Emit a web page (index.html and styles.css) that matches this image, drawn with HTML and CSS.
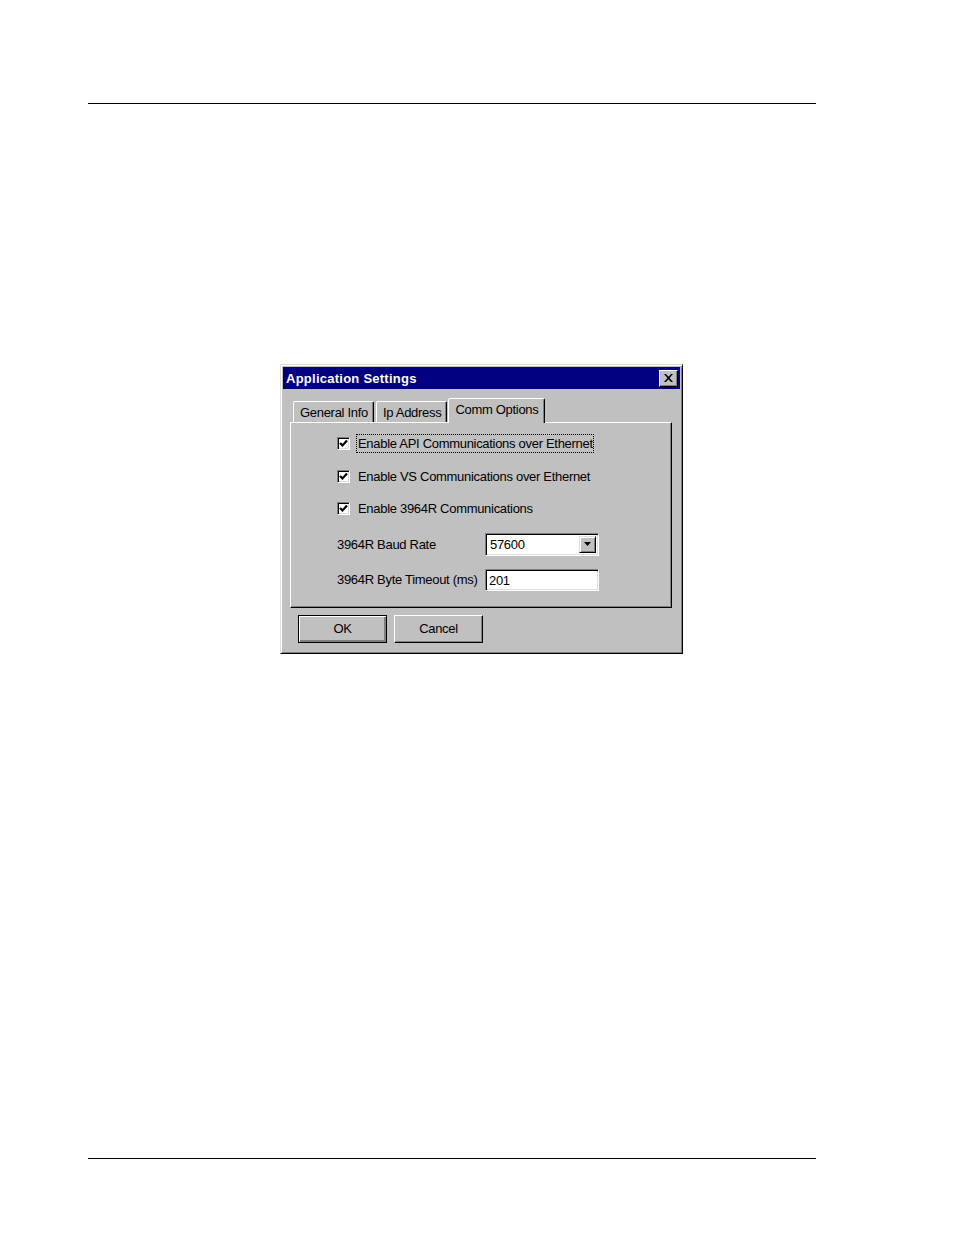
FILE: index.html
```html
<!DOCTYPE html>
<html>
<head>
<meta charset="utf-8">
<link rel="stylesheet" href="styles.css">
</head>
<body>
<div class="page">
  <div class="rule top-rule"></div>
  <div class="dialog">
    <div class="titlebar">
      <span class="title">Application Settings</span>
      <span class="close">
        <svg width="9" height="8" viewBox="0 0 9 8"><path d="M0 0h2l2.5 2.7L7 0h2L5.5 4 9 8H7L4.5 5.3 2 8H0l3.5-4z" fill="#000"/></svg>
      </span>
    </div>
    <div class="tabs">
      <div class="tab first">General Info</div>
      <div class="tab">Ip Address</div>
      <div class="tab active">Comm Options</div>
    </div>
    <div class="panel">
      <div class="check-row">
        <span class="checkbox"><svg width="9" height="9" viewBox="0 0 9 9"><path d="M1 4l2.5 2.5L8 1.5" fill="none" stroke="#000" stroke-width="2.2"/></svg></span>
        <span class="label focus">Enable API Communications over Ethernet</span>
      </div>
      <div class="check-row">
        <span class="checkbox"><svg width="9" height="9" viewBox="0 0 9 9"><path d="M1 4l2.5 2.5L8 1.5" fill="none" stroke="#000" stroke-width="2.2"/></svg></span>
        <span class="label">Enable VS Communications over Ethernet</span>
      </div>
      <div class="check-row">
        <span class="checkbox"><svg width="9" height="9" viewBox="0 0 9 9"><path d="M1 4l2.5 2.5L8 1.5" fill="none" stroke="#000" stroke-width="2.2"/></svg></span>
        <span class="label">Enable 3964R Communications</span>
      </div>
      <div class="field-row baud">
        <span class="field-label">3964R Baud Rate</span>
        <div class="combo">
          <span class="combo-value">57600</span>
          <span class="combo-btn"><svg width="7" height="4" viewBox="0 0 7 4"><path d="M0 0h7L3.5 4z" fill="#000"/></svg></span>
        </div>
      </div>
      <div class="field-row timeout">
        <span class="field-label">3964R Byte Timeout (ms)</span>
        <div class="textbox">201</div>
      </div>
    </div>
    <div class="buttons">
      <div class="button default">OK</div>
      <div class="button">Cancel</div>
    </div>
  </div>
  <div class="rule bottom-rule"></div>
</div>
</body>
</html>
```
FILE: styles.css
```css
html, body {
  margin: 0;
  padding: 0;
  background: #fff;
}
body {
  font-family: "Liberation Sans", Arial, sans-serif;
  font-size: 13px;
  letter-spacing: -0.3px;
  color: #000;
}
.page {
  width: 954px;
  height: 1235px;
  padding-top: 103px;
  box-sizing: border-box;
}
.rule {
  margin-left: 88px;
  width: 728px;
  height: 1px;
  background: #000;
}
.bottom-rule {
  margin-top: 504px;
}
.dialog {
  margin-top: 260px;
  margin-left: 280px;
  width: 403px;
  height: 290px;
  box-sizing: border-box;
  background: #c0c0c0;
  border: 1px solid;
  border-color: #dfdfdf #000 #000 #dfdfdf;
  box-shadow: inset 1px 1px #fff, inset -1px -1px #808080;
  padding: 2px;
}
.titlebar {
  height: 22px;
  background: #000080;
  color: #fff;
  display: flex;
  align-items: center;
  justify-content: space-between;
  padding: 0 2px 0 3px;
}
.title {
  font-weight: bold;
  font-size: 13px;
  letter-spacing: 0.25px;
}
.close {
  width: 19px;
  height: 17px;
  box-sizing: border-box;
  background: #c0c0c0;
  border: 1px solid;
  border-color: #fff #000 #000 #fff;
  box-shadow: inset -1px -1px #808080;
  display: flex;
  align-items: center;
  justify-content: center;
  padding-bottom: 1px;
}
.tabs {
  display: flex;
  align-items: flex-end;
  margin: 9px 0 0 7px;
  height: 25px;
  position: relative;
  z-index: 1;
  margin-bottom: -1px;
}
.tab {
  height: 21px;
  box-sizing: border-box;
  padding: 3px 5px 0 6px;
  border: 1px solid;
  border-bottom: none;
  border-color: #fff #000 transparent #fff;
  box-shadow: inset -1px 0 #808080;
  border-radius: 2px 2px 0 0;
  margin-left: 2px;
  white-space: nowrap;
  margin-bottom: 1px;
}
.tab.first {
  margin-left: 3px;
}
.tab.active {
  height: 25px;
  margin-bottom: 0;
  margin-left: 1px;
  padding: 3px 6px 0 6px;
  background: #c0c0c0;
}
.panel {
  margin-left: 7px;
  width: 382px;
  height: 186px;
  box-sizing: border-box;
  border: 1px solid;
  border-color: #fff #000 #000 #fff;
  box-shadow: inset -1px -1px #808080;
  padding: 12px 0 0 46px;
}
.check-row {
  display: flex;
  align-items: center;
  height: 17px;
  margin-bottom: 15.5px;
}
.checkbox {
  width: 13px;
  height: 13px;
  box-sizing: border-box;
  background: #fff;
  border: 1px solid;
  border-color: #808080 #fff #fff #808080;
  box-shadow: inset 1px 1px #000, inset -1px -1px #dfdfdf;
  display: flex;
  align-items: center;
  justify-content: center;
  margin-right: 6px;
}
.label {
  padding: 1px 0 1px 1px;
  border: 1px dotted transparent;
  white-space: nowrap;
}
.label.focus {
  border-color: #000;
}
.field-row {
  display: flex;
  align-items: center;
}
.field-row.baud {
  height: 23px;
}
.field-row.timeout {
  margin-top: 13px;
  height: 22px;
}
.field-label {
  width: 148px;
  white-space: nowrap;
}
.combo, .textbox {
  width: 114px;
  box-sizing: border-box;
  background: #fff;
  border: 1px solid;
  border-color: #808080 #fff #fff #808080;
  box-shadow: inset 1px 1px #000, inset -1px -1px #dfdfdf;
}
.combo {
  height: 23px;
  display: flex;
  align-items: center;
  justify-content: space-between;
  padding: 2px 2px 2px 4px;
}
.textbox {
  height: 22px;
  padding: 3px 3px;
  line-height: 15px;
}
.combo-btn {
  width: 17px;
  height: 17px;
  box-sizing: border-box;
  background: #c0c0c0;
  border: 1px solid;
  border-color: #dfdfdf #000 #000 #dfdfdf;
  box-shadow: inset 1px 1px #fff, inset -1px -1px #808080;
  display: flex;
  align-items: center;
  justify-content: center;
}
.buttons {
  display: flex;
  gap: 7px;
  margin: 7px 0 0 15px;
}
.button {
  width: 89px;
  height: 28px;
  box-sizing: border-box;
  border: 1px solid;
  border-color: #fff #000 #000 #fff;
  box-shadow: inset -1px -1px #808080;
  display: flex;
  align-items: center;
  justify-content: center;
  padding-bottom: 1px;
}
.button.default {
  border: 1px solid #000;
  box-shadow: inset 1px 1px #fff, inset -2px -2px #808080, inset -1px -1px #000;
}
```
